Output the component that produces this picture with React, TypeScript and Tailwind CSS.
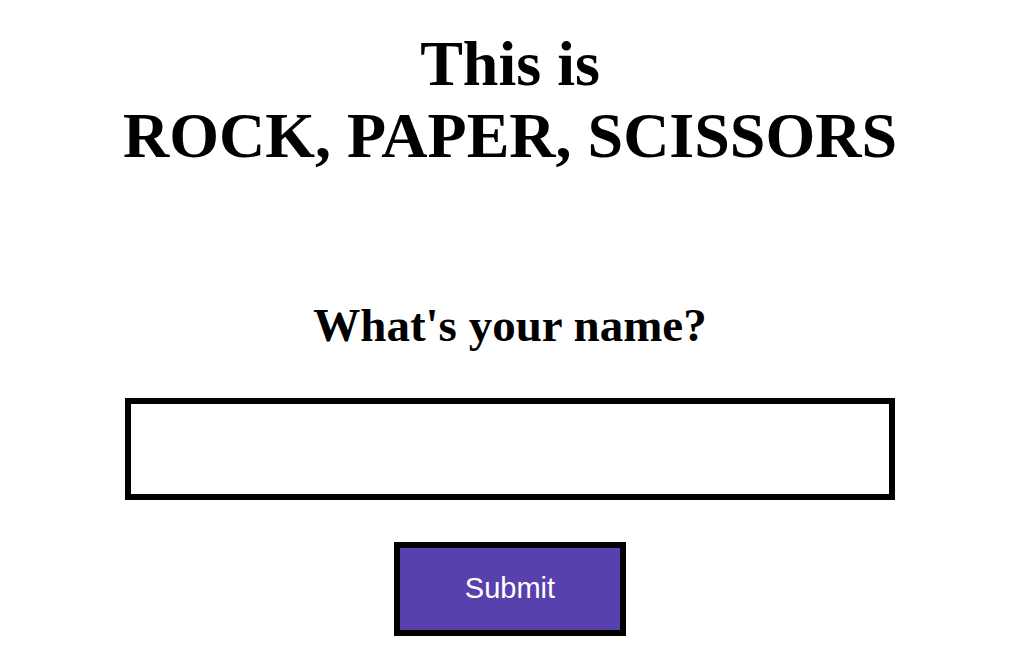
export default function App() {
  return (
    <div className="min-h-screen bg-white pl-[10px] flex flex-col items-center text-black">
      {/* Heading */}
      <h1 className="mt-[28px] text-center text-[64px] leading-[72px] font-bold font-['Liberation_Serif',serif]">
        This is
        <br />
        ROCK, PAPER, SCISSORS
      </h1>

      <h2 className="mt-[126px] text-center text-[47px] leading-[55px] font-bold font-['Liberation_Serif',serif]">
        What's your name?
      </h2>

      <input
        type="text"
        className="mt-[45px] w-[770px] h-[102px] border-[6px] border-black bg-white px-3 text-2xl outline-none font-['Liberation_Sans',sans-serif]"
      />

      <button className="mt-[42px] w-[232px] h-[94px] border-[6px] border-black bg-[#5841ad] text-white text-[29px] font-['Liberation_Sans',sans-serif]">
        Submit
      </button>
    </div>
  );
}
